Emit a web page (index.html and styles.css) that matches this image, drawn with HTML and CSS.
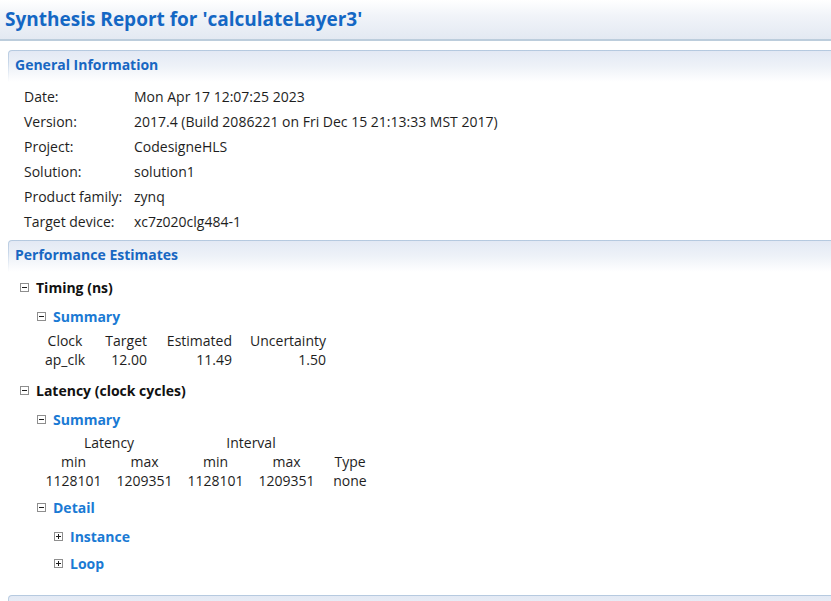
FILE: index.html
```html
<!DOCTYPE html>
<html>
<head>
<meta charset="utf-8">
<link rel="stylesheet" href="styles.css">
</head>
<body>
<div class="title-bar"><h1 class="title">Synthesis Report for 'calculateLayer3'</h1></div>

<section class="section">
  <div class="section-head"><div class="section-head-inner">General Information</div></div>
  <div class="info">
    <div class="lbl">Date:</div><div>Mon Apr 17 12:07:25 2023</div>
    <div class="lbl">Version:</div><div>2017.4 (Build 2086221 on Fri Dec 15 21:13:33 MST 2017)</div>
    <div class="lbl">Project:</div><div>CodesigneHLS</div>
    <div class="lbl">Solution:</div><div>solution1</div>
    <div class="lbl">Product family:</div><div>zynq</div>
    <div class="lbl">Target device:</div><div>xc7z020clg484-1</div>
  </div>
</section>

<section class="section perf">
  <div class="section-head"><div class="section-head-inner">Performance Estimates</div></div>
  <div class="tree">
    <div class="node lvl1 timing"><span class="box minus"></span><span class="h-black">Timing (ns)</span></div>
    <div class="node lvl2 sum1"><span class="box minus"></span><span class="h-blue">Summary</span></div>
    <table class="tbl timing-tbl">
      <tr><th>Clock</th><th>Target</th><th>Estimated</th><th>Uncertainty</th></tr>
      <tr><td>ap_clk</td><td>12.00</td><td>11.49</td><td>1.50</td></tr>
    </table>
    <div class="node lvl1 latency"><span class="box minus"></span><span class="h-black">Latency (clock cycles)</span></div>
    <div class="node lvl2 sum2"><span class="box minus"></span><span class="h-blue">Summary</span></div>
    <table class="tbl lat-tbl">
      <tr><th colspan="2">Latency</th><th colspan="2">Interval</th><th></th></tr>
      <tr><th>min</th><th>max</th><th>min</th><th>max</th><th>Type</th></tr>
      <tr><td>1128101</td><td>1209351</td><td>1128101</td><td>1209351</td><td>none</td></tr>
    </table>
    <div class="node lvl2 detail"><span class="box minus"></span><span class="h-blue">Detail</span></div>
    <div class="node lvl3 inst"><span class="box plus"></span><span class="h-blue">Instance</span></div>
    <div class="node lvl3 loop"><span class="box plus"></span><span class="h-blue">Loop</span></div>
  </div>
</section>

<section class="section last">
  <div class="section-head"><div class="section-head-inner"></div></div>
</section>
</body>
</html>
```
FILE: styles.css
```css
html, body {
  margin: 0;
  padding: 0;
  background: #ffffff;
}
body {
  font-family: "Open Sans", "Noto Sans", sans-serif;
  font-size: 14px;
  color: #1e1e1e;
  overflow: hidden;
  height: 601px;
}
.title-bar {
  height: 39px;
  background: linear-gradient(#ffffff 0%, #f1f4f9 40%, #e3e9f2 100%);
  border-bottom: 2px solid #bccddc;
  box-sizing: content-box;
  display: flex;
  align-items: center;
  padding-left: 5px;
}
.title {
  margin: 0;
  font-size: 19px;
  font-weight: 700;
  color: #1467c4;
  line-height: 24px;
  padding-bottom: 1px;
}
.section {
  margin-top: 9px;
  margin-left: 8px;
}
.section.perf {
  margin-top: 6px;
}
.section.last {
  margin-top: 20px;
}
.section-head {
  padding: 1px 0 0 1px;
  border-top-left-radius: 4px;
  background: linear-gradient(#b5c9df 0%, #c9d8ea 40%, #ffffff 100%);
}
.section-head-inner {
  height: 31px;
  box-sizing: border-box;
  border-top-left-radius: 3px;
  background: linear-gradient(#e3e9f4 0%, #eef2f8 50%, #ffffff 100%);
  padding: 4px 0 0 6px;
  display: flex;
  align-items: flex-start;
  line-height: 19px;
  font-weight: 700;
  color: #1867c2;
  font-size: 14px;
}
.info {
  display: grid;
  grid-template-columns: 110px auto;
  grid-auto-rows: 25px;
  align-items: center;
  padding: 2px 0 0 16px;
}
.tree {
  padding-top: 3px;
}
.node {
  display: flex;
  align-items: center;
  height: 24px;
}
.lvl1 { padding-left: 12px; }
.lvl2 { padding-left: 29px; }
.lvl3 { padding-left: 46px; }
.box {
  width: 9px;
  height: 9px;
  border: 1px solid #8e8e8e;
  box-sizing: border-box;
  margin-right: 7px;
  position: relative;
  flex: none;
}
.box::before {
  content: "";
  position: absolute;
  left: 1px;
  top: 3px;
  width: 5px;
  height: 1px;
  background: #1e1e1e;
}
.box.plus::after {
  content: "";
  position: absolute;
  left: 3px;
  top: 1px;
  width: 1px;
  height: 5px;
  background: #1e1e1e;
}
.h-black {
  font-weight: 700;
  color: #111111;
}
.h-blue {
  font-weight: 700;
  color: #1a7ad4;
}
.sum1 { margin-top: 5px; }
.tbl {
  border-collapse: collapse;
}
.tbl th, .tbl td {
  font-weight: 400;
  height: 19px;
  padding: 0;
  white-space: nowrap;
  line-height: 19px;
}
.timing-tbl {
  margin-top: 3px;
  margin-left: 34px;
}
.timing-tbl th, .timing-tbl td { text-align: right; }
.timing-tbl th:nth-child(1), .timing-tbl td:nth-child(1) { width: 46px; text-align: center; }
.timing-tbl th:nth-child(2), .timing-tbl td:nth-child(2) { width: 59px; }
.timing-tbl th:nth-child(3), .timing-tbl td:nth-child(3) { width: 85px; }
.timing-tbl th:nth-child(4), .timing-tbl td:nth-child(4) { width: 94px; }
.latency { margin-top: 9px; }
.sum2 { margin-top: 5px; }
.lat-tbl {
  margin-top: 2px;
  margin-left: 30px;
}
.lat-tbl td, .lat-tbl th { width: 71px; text-align: center; }
.lat-tbl td:last-child, .lat-tbl th:last-child { width: 56px; }
.detail { margin-top: 5px; }
.inst { margin-top: 5px; }
.loop { margin-top: 3px; }
```
